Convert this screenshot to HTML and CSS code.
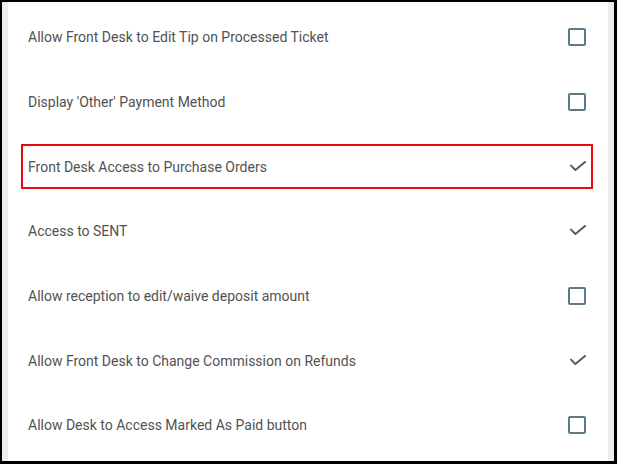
FILE: index.html
```html
<!DOCTYPE html>
<html lang="en">
<head>
    <meta charset="UTF-8">
    <meta name="viewport" content="width=device-width, initial-scale=1.0">
    <title>Front Desk Settings</title>
    <link rel="stylesheet" href="styles.css">
</head>
<body>

    <div class="screen">
        <!-- Settings list -->
        <ul class="settings-list">
            <li class="setting-row">
                <div class="setting">
                    <span class="setting-name">Allow Front Desk to Edit Tip on Processed Ticket</span>
                    <span class="checkbox"></span>
                </div>
            </li>
            <li class="setting-row">
                <div class="setting">
                    <span class="setting-name">Display 'Other' Payment Method</span>
                    <span class="checkbox"></span>
                </div>
            </li>
            <li class="setting-row">
                <div class="setting highlighted">
                    <span class="setting-name">Front Desk Access to Purchase Orders</span>
                    <svg class="check" viewBox="0 0 18 18"><path d="M3 7.6 L7.4 12 L17 4"/></svg>
                </div>
            </li>
            <li class="setting-row">
                <div class="setting">
                    <span class="setting-name">Access to SENT</span>
                    <svg class="check" viewBox="0 0 18 18"><path d="M3 7.6 L7.4 12 L17 4"/></svg>
                </div>
            </li>
            <li class="setting-row">
                <div class="setting">
                    <span class="setting-name">Allow reception to edit/waive deposit amount</span>
                    <span class="checkbox"></span>
                </div>
            </li>
            <li class="setting-row">
                <div class="setting">
                    <span class="setting-name">Allow Front Desk to Change Commission on Refunds</span>
                    <svg class="check" viewBox="0 0 18 18"><path d="M3 7.6 L7.4 12 L17 4"/></svg>
                </div>
            </li>
            <li class="setting-row">
                <div class="setting">
                    <span class="setting-name">Allow Desk to Access Marked As Paid button</span>
                    <span class="checkbox"></span>
                </div>
            </li>
        </ul>
    </div>

</body>
</html>
```

FILE: styles.css
```css
/* Global Styles */
body, html {
    margin: 0;
    padding: 0;
    height: 100%;
    background-color: #000; /* dark window edge */
    font-family: Roboto, "Noto Sans", sans-serif;
}

/* Page frame with light side gutters */
.screen {
    box-sizing: border-box;
    height: 459px;
    margin: 2px 3px 0 2px;
    padding: 0 6px;
    background-color: #ededf4;
}

/* Settings list */
.settings-list {
    list-style-type: none;
    margin: 0;
    height: 100%;
    box-sizing: border-box;
    padding: 3px 15px 0 13px;
    background-color: #fff;
}

.setting-row {
    height: 64.7px;
    display: flex;
    align-items: center;
}

.setting {
    flex: 1;
    height: 41px;
    display: flex;
    align-items: center;
    justify-content: space-between;
    padding: 0 5px;
    border: 2px solid transparent;
}

/* Row called out with a red frame */
.setting.highlighted {
    border-color: #e8080d;
}

.setting-name {
    font-size: 14px;
    color: #525252;
}

/* Empty checkbox */
.checkbox {
    box-sizing: border-box;
    width: 18px;
    height: 18px;
    border: 2px solid #5d7a88;
    border-radius: 2px;
}

/* Ticked state */
.check {
    width: 18px;
    height: 18px;
    fill: none;
    stroke: #4a5f6b;
    stroke-width: 2;
    stroke-linecap: round;
    stroke-linejoin: round;
}
```
